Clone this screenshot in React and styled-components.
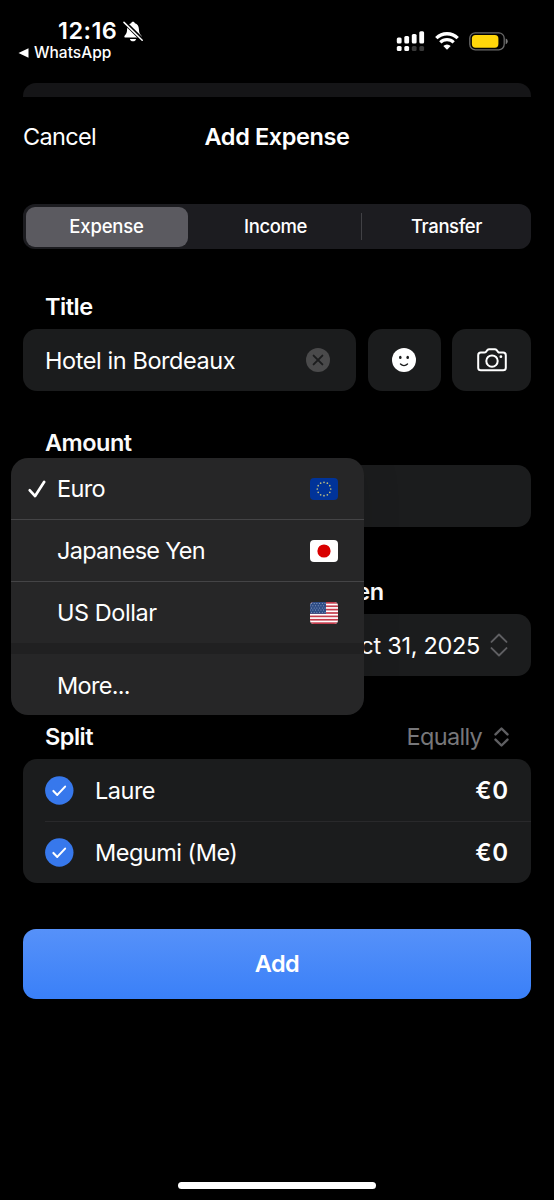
/** @format */
import React from "react";
import styled, { createGlobalStyle } from "styled-components";

const GlobalStyle = createGlobalStyle`
  * {
    box-sizing: border-box;
  }

  body {
    margin: 0;
    background: #000000;
    color: #ffffff;
    font-family: Inter, "Liberation Sans", sans-serif;
    font-size: 23.5px;
    letter-spacing: -0.4px;
  }

  button {
    border: 0;
    padding: 0;
    background: none;
    color: inherit;
    font: inherit;
    letter-spacing: inherit;
  }

  svg {
    display: block;
    flex: none;
  }
`;

const BellOff = () => (
  <svg width='20' height='21' viewBox='0 0 20 21'>
    <path
      d='M10 .8c1 0 1.7.6 1.9 1.5 2.500.8 3.900 2.900 4 5.700.1 3.500.7 4.900 2.300 6.500.9 1 .4 2.100-.8 2.100H2.600c-1.200 0-1.700-1.100-.8-2.100 1.600-1.600 2.200-3 2.300-6.500.1-2.800 1.500-4.900 4-5.700C8.300 1.400 9 .8 10 .8z'
      fill='#fff'
    />
    <path d='M6.900 18h6.200c-.3 1.400-1.500 2.300-3.100 2.300S7.200 19.400 6.900 18z' fill='#fff' />
    <path d='M1 .8l18.500 18.200' stroke='#000' strokeWidth='3.900' />
    <path d='M1 1.400l18.200 17.900' stroke='#fff' strokeWidth='1.500' strokeLinecap='round' />
  </svg>
);

const Signal = () => (
  <svg width='29' height='21' viewBox='0 0 29 21' fill='#fff'>
    <rect x='.8' y='6.500' width='4.800' height='6' rx='1.500' />
    <rect x='8.300' y='5' width='4.800' height='7.500' rx='1.500' />
    <rect x='15.800' y='3' width='4.800' height='9.500' rx='1.500' />
    <rect x='23.300' y='.3' width='4.800' height='12.200' rx='1.500' />
    <rect x='.8' y='15' width='4.800' height='5' rx='1.500' />
    <rect x='8.300' y='15' width='4.800' height='5' rx='1.500' />
    <rect x='15.800' y='15' width='4.800' height='5' rx='1.500' fill='#3a3a3a' />
    <rect x='23.300' y='15' width='4.800' height='5' rx='1.500' fill='#3a3a3a' />
  </svg>
);

const Wifi = () => (
  <svg width='24' height='18' viewBox='0 0 24 18' fill='none' stroke='#fff'>
    <path d='M1.300 6.100a15.300 15.300 0 0 1 21.400 0' strokeWidth='3.300' />
    <path d='M5.300 10.300a9.600 9.600 0 0 1 13.400 0' strokeWidth='3.200' />
    <path d='M12 17.800l-3.700-3.900a5.300 5.300 0 0 1 7.400 0z' fill='#fff' stroke='none' />
  </svg>
);

const Battery = () => (
  <svg width='39' height='19' viewBox='0 0 39 19'>
    <rect x='.8' y='.8' width='34.400' height='17' rx='5.500' fill='none' stroke='#6a6a6a' strokeWidth='1.300' />
    <rect x='2.900' y='2.900' width='26.500' height='12.800' rx='3.600' fill='#ffd60a' />
    <path d='M36.700 6.400c1.300.4 2 1.500 2 2.900s-.7 2.500-2 2.900z' fill='#7a7a7a' />
  </svg>
);

const ClearIcon = () => (
  <svg width='24' height='24' viewBox='0 0 24 24'>
    <circle cx='12' cy='12' r='12' fill='#4a4a4b' />
    <path d='M7.600 7.600l8.800 8.800M16.400 7.600l-8.800 8.800' stroke='#1b1c1d' strokeWidth='1.900' strokeLinecap='round' />
  </svg>
);

const SmileIcon = () => (
  <svg width='24' height='24' viewBox='0 0 24 24'>
    <circle cx='12' cy='12' r='12' fill='#fff' />
    <ellipse cx='8.300' cy='9.400' rx='1.300' ry='1.600' fill='#1b1c1d' />
    <ellipse cx='15.700' cy='9.400' rx='1.300' ry='1.600' fill='#1b1c1d' />
    <path d='M8.500 16c2 1.900 5 1.900 7 0' stroke='#1b1c1d' strokeWidth='1.400' strokeLinecap='round' fill='none' />
  </svg>
);

const CameraIcon = () => (
  <svg width='30' height='24' viewBox='0 0 30 24' fill='none' stroke='#fff' strokeWidth='2'>
    <path
      d='M3.900 4.600h3.400c.8 0 1.200-.2 1.700-.8l1.300-1.600c.6-.7 1-.9 1.900-.9h5.600c.9 0 1.300.2 1.900.9L21 3.800c.5.6.9.8 1.700.8h3.400c1.700 0 2.700 1 2.700 2.700v12.400c0 1.700-1 2.600-2.700 2.600H3.900c-1.700 0-2.700-.9-2.700-2.600V7.300c0-1.700 1-2.700 2.700-2.700z'
      strokeLinejoin='round'
    />
    <circle cx='15' cy='13.100' r='5.700' />
    <circle cx='23.900' cy='8.700' r='1.400' fill='#fff' stroke='none' />
  </svg>
);

const CheckMark = () => (
  <svg width='18' height='18' viewBox='0 0 18 18' fill='none'>
    <path
      d='M1.800 10.300l5.300 5.800L16.100 2'
      stroke='#fff'
      strokeWidth='2.700'
      strokeLinecap='round'
      strokeLinejoin='round'
    />
  </svg>
);

const CheckCircle = () => (
  <svg width='29' height='29' viewBox='0 0 29 29' fill='none'>
    <circle cx='14.300' cy='14.500' r='14.200' fill='#3778ec' />
    <path
      d='M8.400 14.900l3.900 4 7.800-8.300'
      stroke='#fff'
      strokeWidth='2.100'
      strokeLinecap='round'
      strokeLinejoin='round'
    />
  </svg>
);

const UpDown = ({ width, height, weight }) => (
  <svg width={width} height={height} viewBox={`0 0 ${width} ${height}`} fill='none'>
    <path
      d={`M1.500 ${height * 0.37}L${width / 2} 1.500l${width / 2 - 1.5} ${height * 0.37 - 1.5}M1.500 ${
        height * 0.63
      }L${width / 2} ${height - 1.5}l${width / 2 - 1.5} ${1.5 - height * 0.37}`}
      stroke='#5f5f62'
      strokeWidth={weight}
      strokeLinecap='round'
      strokeLinejoin='round'
    />
  </svg>
);

const FlagEU = () => (
  <svg width='28' height='22' viewBox='0 0 28 22'>
    <rect width='28' height='22' rx='4' fill='#003399' />
    {Array.from({ length: 12 }, (_, i) => {
      const a = (i * Math.PI) / 6;
      return <circle key={i} cx={14 + 6.7 * Math.sin(a)} cy={11 - 6.7 * Math.cos(a)} r='.85' fill='#b9bb80' />;
    })}
  </svg>
);

const FlagJP = () => (
  <svg width='28' height='22' viewBox='0 0 28 22'>
    <rect width='28' height='22' rx='4' fill='#fff' />
    <circle cx='14' cy='11' r='6.600' fill='#d90000' />
  </svg>
);

const FlagUS = () => (
  <svg width='28' height='22' viewBox='0 0 28 22'>
    <clipPath id='usFlag'>
      <rect width='28' height='22' rx='4' />
    </clipPath>
    <g clipPath='url(#usFlag)'>
      <rect width='28' height='22' fill='#fff' />
      {[0, 2, 4, 6, 8, 10, 12].map((n) => (
        <rect key={n} y={(n * 22) / 13} width='28' height={22 / 13} fill='#c33c4c' />
      ))}
      <rect width='16' height='11.800' fill='#2f4d86' />
      {[1.5, 3.7, 5.9, 8.1, 10.3].map((y, row) =>
        [1.5, 4.2, 6.9, 9.6, 12.3, 15].map((x) => (
          <circle key={`${x}-${y}`} cx={x - (row % 2) * 1.35} cy={y} r='.5' fill='#9fb0cf' />
        ))
      )}
    </g>
  </svg>
);

const currencies = [
  { name: "Euro", Flag: FlagEU, selected: true, spacing: "-0.65px" },
  { name: "Japanese Yen", Flag: FlagJP, spacing: "-0.72px" },
  { name: "US Dollar", Flag: FlagUS, spacing: "-0.45px" },
];

const people = [
  { name: "Laure", amount: "€0" },
  { name: "Megumi (Me)", amount: "€0" },
];

const App = () => {
  return (
    <Screen>
      <GlobalStyle />
      <StatusBar>
        <StatusLeft>
          <Clock>
            <span>12:16</span>
            <BellOff />
          </Clock>
          <BackTo>
            <svg width='11' height='10' viewBox='0 0 11 10'>
              <path d='M10.500 .3v9.400L.5 5z' fill='#fff' />
            </svg>
            WhatsApp
          </BackTo>
        </StatusLeft>
        <StatusRight>
          <Signal />
          <Wifi />
          <Battery />
        </StatusRight>
      </StatusBar>
      <BackSheet />

      <NavBar>
        <Cancel>Cancel</Cancel>
        <NavTitle>Add Expense</NavTitle>
      </NavBar>

      <Form>
        <Segments>
          <Segment $active $width='162px'>
            Expense
          </Segment>
          <Segment $width='173px'>Income</Segment>
          <Divider />
          <Segment>Transfer</Segment>
        </Segments>

        <Section $gap='35px'>
          <LabelRow>
            <Label>Title</Label>
          </LabelRow>
          <TitleRow>
            <Field>
              <Text $spacing='-0.42px'>Hotel in Bordeaux</Text>
              <ClearIcon />
            </Field>
            <Field as='button' $center>
              <SmileIcon />
            </Field>
            <Field as='button' $center>
              <CameraIcon />
            </Field>
          </TitleRow>
        </Section>

        <Section $gap='29px'>
          <LabelRow>
            <Label>Amount</Label>
          </LabelRow>
          <Field />
          <Menu>
            {currencies.map(({ name, Flag, selected, spacing }) => (
              <MenuItem key={name}>
                <CheckSlot>{selected && <CheckMark />}</CheckSlot>
                <MenuText $spacing={spacing}>{name}</MenuText>
                <Flag />
              </MenuItem>
            ))}
            <MenuGap />
            <MenuItem>
              <CheckSlot />
              <MenuText $spacing='-0.7px'>More...</MenuText>
            </MenuItem>
          </Menu>
        </Section>

        <Section $gap='42px'>
          <DateColumn>
            <LabelRow>
              <Label>When</Label>
            </LabelRow>
            <DateField>
              <Text $spacing='-0.3px'>Oct 31, 2025</Text>
              <UpDown width={18} height={24} weight={1.9} />
            </DateField>
          </DateColumn>
        </Section>

        <Section $gap='38px'>
          <LabelRow>
            <Label>Split</Label>
            <SplitMode>
              Equally
              <UpDown width={15} height={20} weight={2.4} />
            </SplitMode>
          </LabelRow>
          <People>
            {people.map(({ name, amount }) => (
              <Person key={name}>
                <CheckCircle />
                <PersonName>{name}</PersonName>
                <Amount>{amount}</Amount>
              </Person>
            ))}
          </People>
        </Section>

        <AddButton>Add</AddButton>
      </Form>

      <HomeIndicator />
    </Screen>
  );
};

export default App;

const Screen = styled.div`
  width: 554px;
  height: 1200px;
  overflow: hidden;
  display: flex;
  flex-direction: column;
  background: #000000;
`;

const StatusBar = styled.div`
  height: 83px;
  display: flex;
  justify-content: space-between;
  padding: 17px 46px 0 18px;
`;

const StatusLeft = styled.div`
  display: flex;
  flex-direction: column;
`;

const Clock = styled.div`
  display: flex;
  align-items: center;
  gap: 6px;
  height: 28px;
  padding-left: 40px;
  font-size: 23.5px;
  font-weight: 600;
  line-height: 24px;
  letter-spacing: 0.45px;
`;

const BackTo = styled.div`
  display: flex;
  align-items: center;
  gap: 5px;
  height: 16px;
  font-size: 15.5px;
  font-weight: 500;
  line-height: 16px;
  letter-spacing: 0;
`;

const StatusRight = styled.div`
  display: flex;
  align-items: center;
  gap: 10px;
  height: 48px;
`;

const BackSheet = styled.div`
  flex: none;
  height: 14px;
  margin: 0 23px;
  border-radius: 13px 13px 0 0;
  background: #151517;
`;

const NavBar = styled.div`
  height: 80px;
  display: grid;
  grid-template-columns: 1fr auto 1fr;
  align-items: center;
  padding: 0 23px 2px;
`;

const Cancel = styled.button`
  justify-self: start;
  letter-spacing: -0.65px;
`;

const NavTitle = styled.div`
  font-weight: 600;
  letter-spacing: -0.4px;
`;

const Form = styled.div`
  display: flex;
  flex-direction: column;
  padding: 27px 23px 0;
`;

const Segments = styled.div`
  display: flex;
  align-items: center;
  height: 45px;
  padding: 2.5px;
  border-radius: 12px;
  background: #1c1c20;
`;

const Segment = styled.button`
  flex: ${({ $width }) => ($width ? `0 0 ${$width}` : "1 1 0")};
  height: 40px;
  padding: 0 0 1px ${({ $active }) => ($active ? "0" : "3px")};
  border-radius: 9px;
  background: ${({ $active }) => ($active ? "#5b5a60" : "transparent")};
  font-size: 18.5px;
  font-weight: ${({ $active }) => ($active ? 500 : 450)};
  letter-spacing: ${({ $active }) => ($active ? "-0.2px" : "-0.4px")};
`;

const Divider = styled.div`
  width: 1px;
  height: 27px;
  background: #414145;
`;

const Section = styled.section`
  position: relative;
  display: flex;
  flex-direction: column;
  margin-top: ${({ $gap }) => $gap};
`;

const LabelRow = styled.div`
  display: flex;
  align-items: center;
  justify-content: space-between;
  height: 45px;
  padding: 0 22px;
`;

const Label = styled.div`
  font-weight: 600;
  letter-spacing: -0.5px;
`;

const TitleRow = styled.div`
  display: grid;
  grid-template-columns: 333px 73px 79px;
  justify-content: space-between;
`;

const Field = styled.div`
  display: flex;
  align-items: center;
  justify-content: ${({ $center }) => ($center ? "center" : "space-between")};
  height: 62px;
  padding: 0 ${({ $center }) => ($center ? "0" : "26px 0 22px")};
  border-radius: 14px;
  background: #1b1c1d;
`;

const DateField = styled(Field)`
  justify-content: flex-end;
  gap: 10px;
  padding-right: 23px;
`;

const Text = styled.span`
  white-space: nowrap;
  letter-spacing: ${({ $spacing }) => $spacing};
`;

const DateColumn = styled.div`
  width: 234px;
  align-self: flex-end;
`;

/* popover over the form, anchored to the amount field */
const Menu = styled.div`
  position: absolute;
  z-index: 2;
  top: 38px;
  left: -12px;
  width: 352.5px;
  overflow: hidden;
  border-radius: 17px;
  background: #262627;
  box-shadow: 0 0 40px rgba(0, 0, 0, 0.1);
`;

const MenuItem = styled.div`
  display: flex;
  align-items: center;
  height: 62px;
  padding: 0 26px 0 17px;
  border-bottom: 1px solid #444446;

  &:nth-child(3) {
    height: 61px;
    border-bottom: 0;
  }

  &:last-child {
    height: 61px;
    padding-top: 1px;
    border-bottom: 0;
  }
`;

const CheckSlot = styled.div`
  width: 29px;
`;

const MenuText = styled(Text)`
  flex: 1;
`;

const MenuGap = styled.div`
  height: 11px;
  background: #202021;
`;

const SplitMode = styled.div`
  display: flex;
  align-items: center;
  gap: 12px;
  color: #77777a;
  letter-spacing: -0.7px;
`;

const People = styled.div`
  border-radius: 14px;
  background: #1b1c1d;
`;

const Person = styled.div`
  display: flex;
  align-items: center;
  height: 62px;
  margin-left: 22px;
  padding-right: 22px;

  & + & {
    border-top: 1px solid #29292b;
  }
`;

const PersonName = styled.div`
  flex: 1;
  padding-left: 21px;
  letter-spacing: -0.5px;
`;

const Amount = styled.div`
  font-size: 24px;
  font-weight: 600;
  letter-spacing: 0.8px;
`;

const AddButton = styled.button`
  height: 70px;
  margin-top: 46px;
  padding-bottom: 2px;
  border-radius: 13px;
  background: linear-gradient(180deg, #5691f9 0%, #3a80f8 100%);
  font-weight: 600;
  letter-spacing: -0.6px;
`;

const HomeIndicator = styled.div`
  width: 198px;
  height: 7px;
  margin: auto auto 11px;
  border-radius: 4px;
  background: #ffffff;
`;
